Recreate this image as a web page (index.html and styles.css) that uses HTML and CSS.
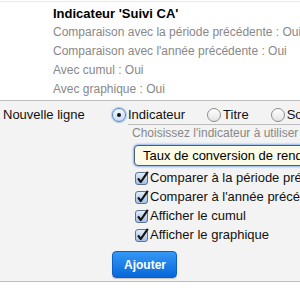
FILE: index.html
```html
<!DOCTYPE html>
<html lang="fr">
<head>
    <meta charset="UTF-8">
    <meta name="viewport" content="width=device-width, initial-scale=1.0">
    <title>Tableau de bord - lignes</title>
    <link rel="stylesheet" href="styles.css">
</head>
<body>
    <div class="summary">
        <div class="summary-title">Indicateur 'Suivi CA'</div>
        <div class="summary-line">Comparaison avec la période précédente : Oui</div>
        <div class="summary-line">Comparaison avec l'année précédente : Oui</div>
        <div class="summary-line">Avec cumul : Oui</div>
        <div class="summary-line">Avec graphique : Oui</div>
    </div>

    <div class="new-line">
        <div class="field-label">Nouvelle ligne</div>
        <div class="field-body">
            <div class="type-choices">
                <label class="choice"><span class="radio checked"></span>Indicateur</label>
                <label class="choice"><span class="radio"></span>Titre</label>
                <label class="choice"><span class="radio"></span>Sous-titre</label>
            </div>

            <div class="indic-box">
                <div class="hint">Choisissez l'indicateur à utiliser</div>
                <div class="select">Taux de conversion de rendez-vous</div>

                <svg class="defs" width="0" height="0"><defs><linearGradient id="cb" x1="0" y1="0" x2="0" y2="1"><stop offset="0" stop-color="#e4eefa"/><stop offset="1" stop-color="#9fbfe6"/></linearGradient></defs></svg>

                <label class="check-row"><svg class="check" viewBox="0 0 14 14"><rect x="0.5" y="1.5" width="12" height="12" rx="2.5" fill="url(#cb)" stroke="#5f7391"/><path d="M3 7.4 L5.8 11 L12.8 0.8" fill="none" stroke="#151515" stroke-width="2.2" stroke-linejoin="round"/></svg>Comparer à la période précédente</label>
                <label class="check-row"><svg class="check" viewBox="0 0 14 14"><rect x="0.5" y="1.5" width="12" height="12" rx="2.5" fill="url(#cb)" stroke="#5f7391"/><path d="M3 7.4 L5.8 11 L12.8 0.8" fill="none" stroke="#151515" stroke-width="2.2" stroke-linejoin="round"/></svg>Comparer à l'année précédente</label>
                <label class="check-row"><svg class="check" viewBox="0 0 14 14"><rect x="0.5" y="1.5" width="12" height="12" rx="2.5" fill="url(#cb)" stroke="#5f7391"/><path d="M3 7.4 L5.8 11 L12.8 0.8" fill="none" stroke="#151515" stroke-width="2.2" stroke-linejoin="round"/></svg>Afficher le cumul</label>
                <label class="check-row"><svg class="check" viewBox="0 0 14 14"><rect x="0.5" y="1.5" width="12" height="12" rx="2.5" fill="url(#cb)" stroke="#5f7391"/><path d="M3 7.4 L5.8 11 L12.8 0.8" fill="none" stroke="#151515" stroke-width="2.2" stroke-linejoin="round"/></svg>Afficher le graphique</label>
            </div>

            <button class="btn-add">Ajouter</button>
        </div>
    </div>
</body>
</html>
```

FILE: styles.css
```css
body {
    margin: 0;
    width: 300px;
    height: 300px;
    overflow: hidden;
    background: #fff;
    font-family: "Liberation Sans", Arial, sans-serif;
    font-size: 13px;
    color: #111;
    white-space: nowrap;
}
.summary {
    margin-top: 1px;
    border-top: 1px solid #e9e9e9;
    padding: 3px 0 1px 53px;
}
.summary-title {
    font-weight: bold;
    line-height: 18px;
    color: #000;
}
.summary-line {
    font-size: 12px;
    line-height: 19px;
    color: #888;
}
.new-line {
    display: grid;
    grid-template-columns: 109px 1fr;
    background-color: #f3f3f3;
    border-top: 1px solid #bdbdbd;
    border-bottom: 1px solid #bdbdbd;
    padding: 5px 0 3px 3px;
}
.field-label {
    line-height: 18px;
}
.field-body {
    min-width: 0;
}
.type-choices {
    display: flex;
    line-height: 18px;
}
.choice {
    display: flex;
    align-items: center;
    flex-shrink: 0;
    margin-right: 22px;
}
.radio {
    box-sizing: border-box;
    flex-shrink: 0;
    width: 14px;
    height: 14px;
    margin-right: 2px;
    border-radius: 50%;
    border: 1px solid #8c8c8c;
    background: linear-gradient(#ffffff, #e4e4e4);
    display: flex;
    align-items: center;
    justify-content: center;
}
.radio.checked {
    border-color: #5a86bf;
    background: linear-gradient(#f4f8fd, #c9dcf2);
    box-shadow: 0 0 1px 1px #a9c8ee;
}
.radio.checked::after {
    content: "";
    width: 4px;
    height: 4px;
    border-radius: 50%;
    background: #111;
}
.indic-box {
    margin-left: 16px;
    border-top: 1px solid #bcbcbc;
    padding-left: 4px;
}
.hint {
    font-size: 12px;
    line-height: 17px;
    color: #888;
}
.select {
    box-sizing: border-box;
    width: 260px;
    height: 21px;
    margin: 3px 0 2px 2px;
    padding-left: 8px;
    line-height: 19px;
    border: 1px solid #4a5f7e;
    border-radius: 4px;
    background: #fbfbe7;
    box-shadow: 0 0 2px 1px #8fb6ea;
    color: #000;
}
.defs {
    position: absolute;
}
.check-row {
    display: flex;
    align-items: center;
    height: 19px;
    line-height: 19px;
}
.check {
    flex-shrink: 0;
    width: 14px;
    height: 14px;
    margin: 0 1px 0 3px;
}
.btn-add {
    display: block;
    box-sizing: border-box;
    height: 27px;
    margin-top: 7px;
    padding: 0 10px 0 11px;
    border: 1px solid #0d5fc4;
    border-radius: 4px;
    background: linear-gradient(#3597f6, #0867d8);
    color: #fff;
    font-family: "Liberation Sans", Arial, sans-serif;
    font-size: 12px;
    font-weight: bold;
    box-shadow: 0 1px 1px rgba(0, 0, 0, 0.2);
}
```
